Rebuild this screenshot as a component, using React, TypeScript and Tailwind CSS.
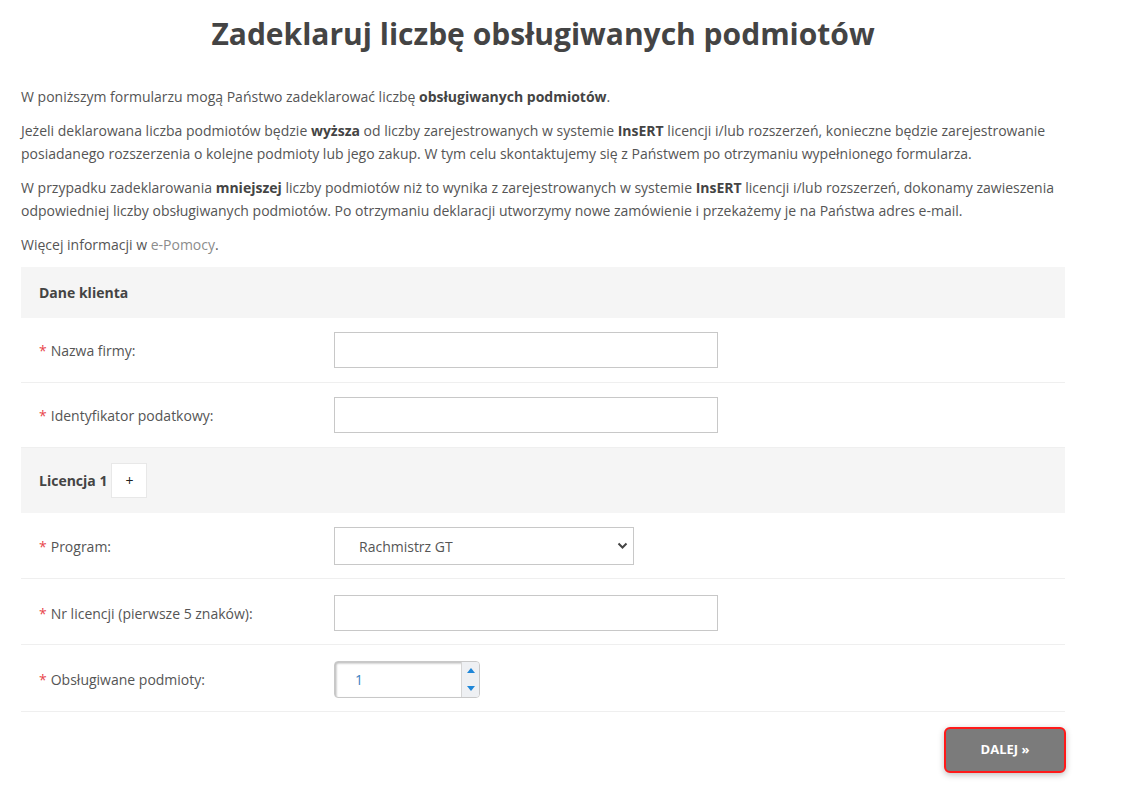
import React from "react";

const Req = () => <span className="text-[#e8464c] mr-[4px]">*</span>;

function Row({ label, children, h = "py-[14px]" }: { label: string; children: React.ReactNode; h?: string }) {
  return (
    <div className={`flex items-center border-b border-[#efefef] ${h}`}>
      <div className="w-[313px] pl-[18px] text-[14px] text-[#555]">
        <Req />
        {label}
      </div>
      <div>{children}</div>
    </div>
  );
}

export default function App() {
  return (
    <div className="bg-white min-h-[794px] text-[#555]" style={{ fontFamily: '"Open Sans", "Liberation Sans", sans-serif' }}>
      <div className="w-[1044px] ml-[21px]">
        <h1 className="text-center text-[30px] font-bold text-[#444] pt-[14px] leading-[40px]">
          Zadeklaruj liczbę obsługiwanych podmiotów
        </h1>
        <div className="mt-[31px] text-[14px] leading-[23px]">
          <p className="mb-[11px]">
            W poniższym formularzu mogą Państwo zadeklarować liczbę <b className="text-[#444]">obsługiwanych podmiotów</b>.
          </p>
          <p className="mb-[11px]">
            Jeżeli deklarowana liczba podmiotów będzie <b className="text-[#444]">wyższa</b> od liczby zarejestrowanych w systemie{" "}
            <b className="text-[#444]">InsERT</b> licencji i/lub rozszerzeń, konieczne będzie zarejestrowanie posiadanego rozszerzenia o
            kolejne podmioty lub jego zakup. W tym celu skontaktujemy się z Państwem po otrzymaniu wypełnionego formularza.
          </p>
          <p className="mb-[11px]">
            W przypadku zadeklarowania <b className="text-[#444]">mniejszej</b> liczby podmiotów niż to wynika z zarejestrowanych w systemie{" "}
            <b className="text-[#444]">InsERT</b> licencji i/lub rozszerzeń, dokonamy zawieszenia odpowiedniej liczby obsługiwanych podmiotów.
            Po otrzymaniu deklaracji utworzymy nowe zamówienie i przekażemy je na Państwa adres e-mail.
          </p>
          <p className="mb-[11px]">
            Więcej informacji w <a className="text-[#8c8c8c]">e-Pomocy</a>.
          </p>
        </div>

        <div className="bg-[#f5f5f5] h-[51px] flex items-center pl-[18px] text-[14px] font-bold text-[#444]">Dane klienta</div>
        <Row label="Nazwa firmy:">
          <input className="w-[384px] h-[36px] border border-[#c8c8c8] outline-none" />
        </Row>
        <Row label="Identyfikator podatkowy:" h="pt-[14px] pb-[14px]">
          <input className="w-[384px] h-[36px] border border-[#c8c8c8] outline-none" />
        </Row>

        <div className="bg-[#f5f5f5] h-[65px] flex items-center pl-[18px] text-[14px] font-bold text-[#444]">
          Licencja 1
          <button className="ml-[4px] w-[36px] h-[35px] bg-white border border-[#e8e8e8] text-[#222] font-normal text-[14px] flex items-center justify-center">
            +
          </button>
        </div>
        <Row label="Program:" h="pt-[14px] pb-[13px]">
          <div className="relative w-[300px] h-[38px] border border-[#c8c8c8] flex items-center pl-[24px] text-[14px] text-[#555]">
            Rachmistrz GT
            <svg className="absolute right-[5px] top-[14px]" width="11" height="8" viewBox="0 0 11 8">
              <path d="M1.5 1.5 L5.5 5.5 L9.5 1.5" fill="none" stroke="#444" strokeWidth="2" />
            </svg>
          </div>
        </Row>
        <Row label="Nr licencji (pierwsze 5 znaków):" h="pt-[16px] pb-[13px]">
          <input className="w-[384px] h-[36px] border border-[#c8c8c8] outline-none" />
        </Row>
        <Row label="Obsługiwane podmioty:" h="pt-[16px] pb-[13px]">
          <div className="flex w-[146px] h-[37px] rounded-[4px] border border-[#c8c8c8] overflow-hidden shadow-[inset_1px_1px_2px_rgba(0,0,0,0.15)]">
            <div className="flex-1 flex items-center pl-[20px] text-[14px] text-[#3b7fc0] border-r border-[#d5d5d5] shadow-[inset_2px_2px_2px_rgba(0,0,0,0.12)]">1</div>
            <div className="w-[17px] bg-[#eef0f3] flex flex-col items-center justify-between py-[6px]">
              <svg width="8" height="5" viewBox="0 0 8 5">
                <path d="M0 5 L4 0 L8 5 Z" fill="#1e86d8" />
              </svg>
              <svg width="8" height="5" viewBox="0 0 8 5">
                <path d="M0 0 L4 5 L8 0 Z" fill="#1e86d8" />
              </svg>
            </div>
          </div>
        </Row>

        <div className="flex justify-end mt-[15px]">
          <button className="w-[122px] h-[46px] bg-[#7b7b7b] border-2 border-[#ff1a1a] rounded-[6px] text-white font-bold text-[13px] shadow-[0_2px_6px_rgba(0,0,0,0.25)] mr-[-1px]">
            DALEJ »
          </button>
        </div>
      </div>
    </div>
  );
}
